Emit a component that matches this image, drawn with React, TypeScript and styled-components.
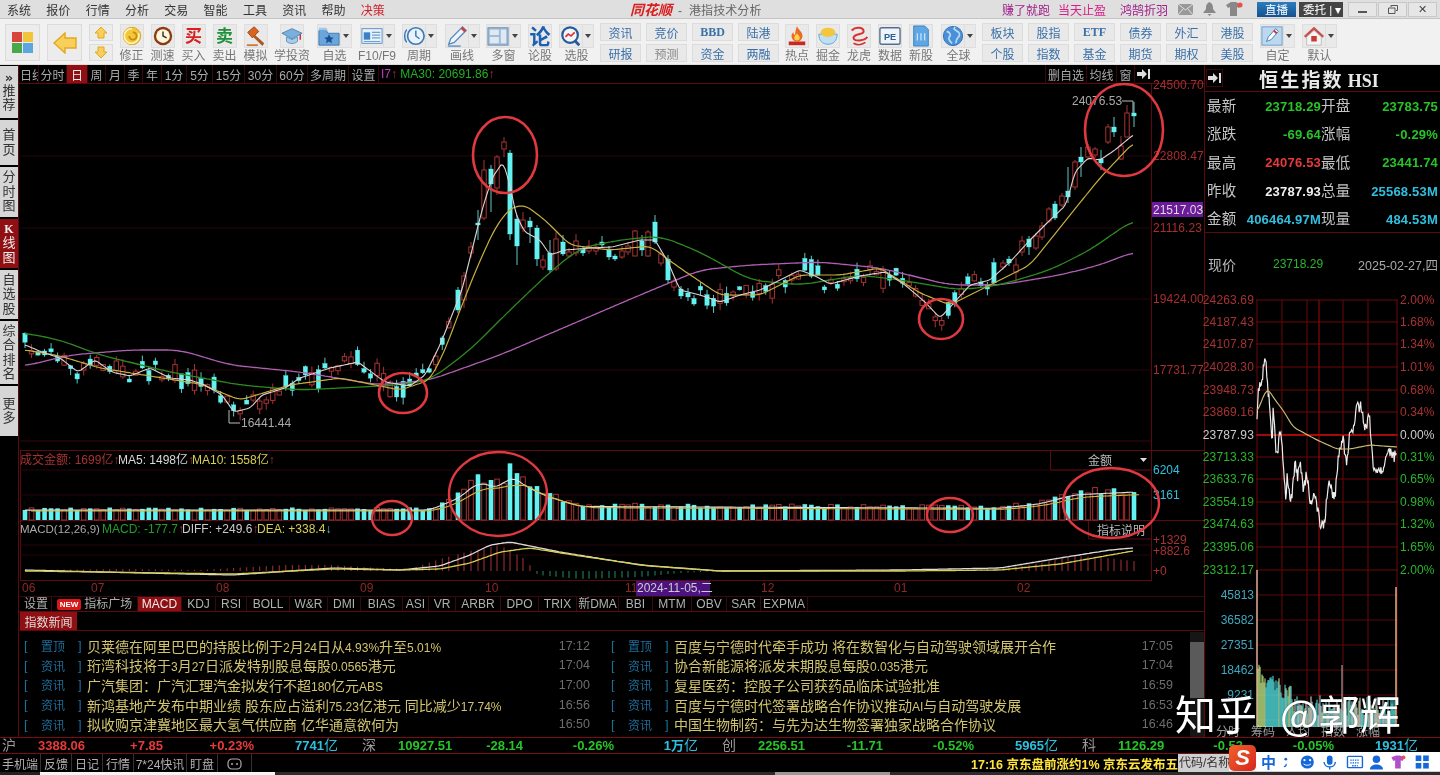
import React from 'react';
import styled, { createGlobalStyle } from 'styled-components';

const UI = `"Liberation Sans","Noto Sans CJK SC",sans-serif`;
const LINE = '#5c0a10';
const DIM = '#2a0508';

const Global = createGlobalStyle`
  html, body { margin: 0; padding: 0; background: #000; overflow: hidden; }
  #root { width: 1440px; height: 775px; }
  svg { display: block; }
  svg text { font-family: ${UI}; }
`;

/* ---------- data helpers ---------- */
type P = [number, number];
const rng = (seed: number) => () => {
  seed |= 0; seed = (seed + 0x6d2b79f5) | 0;
  let t = Math.imul(seed ^ (seed >>> 15), 1 | seed);
  t = (t + Math.imul(t ^ (t >>> 7), 61 | t)) ^ t;
  return ((t ^ (t >>> 14)) >>> 0) / 4294967296;
};
const at = (pts: P[], x: number) => {
  if (x <= pts[0][0]) return pts[0][1];
  for (let i = 1; i < pts.length; i++) {
    if (x <= pts[i][0]) {
      const [a, b] = pts[i - 1]; const [c, d] = pts[i];
      return b + ((d - b) * (x - a)) / (c - a);
    }
  }
  return pts[pts.length - 1][1];
};
const path = (pts: P[]) => pts.map((p, i) => `${i ? 'L' : 'M'}${p[0].toFixed(1)} ${p[1].toFixed(1)}`).join('');
const smooth = (pts: P[], win = 12) => {
  const x0 = pts[0][0]; const x1 = pts[pts.length - 1][0];
  const out: P[] = [];
  for (let x = x0; x <= x1; x += 2) {
    let s = 0; let n = 0;
    for (let k = -win; k <= win; k += 2) { s += at(pts, Math.min(x1, Math.max(x0, x + k))); n++; }
    out.push([x, s / n]);
  }
  return out;
};

const WHITE: P[] = [[25,345],[42,352],[60,358],[78,372],[95,360],[112,372],[130,376],[150,368],[170,378],[190,380],[205,385],[222,395],[234,412],[250,408],[262,395],[285,388],[300,378],[330,368],[358,362],[385,382],[410,386],[425,375],[440,345],[452,315],[462,290],[472,250],[482,210],[492,178],[503,162],[510,185],[516,215],[525,232],[540,240],[550,255],[565,250],[590,248],[612,247],[640,240],[655,240],[668,262],[680,290],[700,295],[720,302],[740,295],[760,290],[780,280],[800,270],[815,276],[830,284],[860,276],[885,272],[905,285],[925,302],[940,318],[952,305],[970,285],[990,280],[1010,262],[1030,240],[1048,222],[1066,205],[1075,172],[1088,158],[1100,160],[1115,150],[1133,135]];
const YELLOW: P[] = [[25,350],[60,356],[100,368],[150,376],[200,384],[240,400],[290,385],[340,378],[400,390],[430,380],[445,350],[460,310],[478,265],[495,228],[510,208],[525,205],[545,220],[570,245],[610,250],[650,246],[680,268],[720,295],[760,295],[800,275],[840,275],[880,268],[920,293],[950,305],[990,285],[1030,265],[1070,215],[1100,178],[1133,143]];
const GREEN: P[] = [[25,333],[60,340],[100,355],[170,372],[240,385],[300,390],[400,385],[430,380],[470,350],[510,310],[550,272],[580,248],[620,240],[660,236],[700,252],[750,280],[800,285],[860,275],[900,280],[960,290],[1000,285],[1050,270],[1090,250],[1133,220]];
const PURPLE: P[] = [[25,366],[70,355],[130,350],[180,350],[230,365],[300,372],[380,385],[430,380],[500,355],[570,325],[640,295],[700,270],[750,265],[820,262],[880,268],[950,285],[1000,285],[1060,275],[1100,265],[1133,252]];

type Candle = { x: number; t: number; b: number; h: number; l: number; up: boolean };
const c = (x: number, t: number, b: number, up: boolean, h = t - 3, l = b + 3): Candle => ({ x, t, b, h, l, up });
const PEAK: Candle[] = [
  c(458,290,310,false),c(464,276,300,true,272,308),c(471,247,253,true,242,258),c(478,223,225,false,210,240),c(484,170,218,true,160,220),c(491,169,184,false,165,212),c(497,157,188,true,155,195),c(504,142,149,true,137,157),c(510,153,234,false,150,240),c(517,219,246,false,215,265),c(523,220,228,true,212,232),c(530,221,227,false,217,243),c(537,228,259,false,225,266),c(543,260,267,true,255,270),c(550,253,270,false,240,273),c(556,239,269,true,232,271),c(563,242,254,false,235,256),c(569,252,256,true,248,258),c(576,241,253,true,234,256),c(583,249,253,false,246,256),c(589,246,251,true,240,254),c(596,247,251,true,243,255),c(602,242,245,false,236,248),c(609,249,257,false,246,260),c(615,256,259,false,254,261),c(622,251,257,true,246,259),c(628,246,252,true,242,255),c(635,231,256,true,230,256),c(642,241,250,false,235,256),c(648,232,256,true,230,257),c(655,222,242,false,215,244),c(661,254,263,true,250,266),c(668,259,280,false,255,283),c(674,281,287,true,278,291),c(681,289,296,false,286,299),c(688,293,297,false,288,301)];
const TAIL: Candle[] = [
  c(1003,263,267,true),c(1009,259,263,false),c(1016,265,272,true,258,283),c(1022,241,252,true,236,256),c(1029,239,247,false,236,255),c(1036,236,248,true,233,250),c(1042,226,237,true,222,240),c(1049,209,221,true,207,223),c(1055,204,218,false,201,220),c(1062,196,205,true,193,207),c(1068,191,197,false,167,203),c(1075,162,187,true,160,190),c(1081,157,162,false,147,177),c(1088,147,157,true,144,160),c(1095,149,155,true,147,158),c(1101,159,163,false,150,170),c(1108,127,142,true,124,144),c(1114,127,132,false,117,137),c(1121,146,159,true,136,160),c(1127,113,137,true,105,137),c(1134,113,116,false,102,127)];

const CANDLES: Candle[] = (() => {
  const r = rng(77);
  const gen = (from: number, to: number) => {
    const out: Candle[] = [];
    for (let x = from; x < to; x += 6.52) {
      const up = r() > 0.55;
      const mid = at(WHITE, x) + (r() - 0.5) * 16;
      const half = 1.5 + r() * r() * 9;
      const t = mid - half; const b = mid + half;
      out.push(c(x, t, b, up, t - r() * 7, b + r() * 7));
    }
    return out;
  };
  return [...gen(25, 454), ...PEAK, ...gen(694, 1000), ...TAIL];
})();

const VOLP: P[] = [[25,11],[430,11],[445,18],[460,25],[478,42],[500,35],[510,50],[525,38],[545,27],[580,15],[1000,13],[1040,18],[1075,28],[1134,31]];
const VOLS = (() => { const r = rng(9); return CANDLES.map(k => at(VOLP, k.x) * (0.85 + r() * 0.3)); })();
const DIFF: P[] = [[25,570],[100,572],[233,575],[333,568],[400,570],[440,566],[470,555],[490,545],[510,542],[560,552],[640,565],[720,571],[900,570],[1000,568],[1060,558],[1110,550],[1133,548]];
const DEA: P[] = [[25,571],[100,572],[233,574],[333,569],[400,570],[440,569],[470,563],[500,552],[530,548],[580,556],[650,566],[720,571],[900,571],[1000,570],[1060,564],[1110,555],[1133,551]];
const MBAR: P[] = [[25,1],[120,2],[200,1],[285,6],[330,6],[380,3],[410,2],[440,12],[470,20],[500,26],[525,12],[538,-4],[580,-8],[640,-6],[680,-2],[720,0],[800,1],[1000,2],[1040,8],[1075,15],[1100,14],[1133,10]];

const TIMEP: P[] = [[1257,417],[1258,393],[1262,380],[1265,353],[1267,380],[1270,407],[1272,450],[1273,410],[1277,460],[1280,427],[1283,457],[1286,500],[1287,477],[1291,503],[1295,463],[1298,477],[1300,460],[1303,490],[1307,473],[1310,500],[1315,497],[1321,528],[1325,520],[1328,483],[1335,498],[1338,460],[1343,438],[1347,465],[1349,440],[1353,427],[1357,408],[1361,407],[1366,430],[1369,413],[1373,465],[1378,473],[1383,472],[1388,450],[1393,457],[1397,454]];
const TIMEA: P[] = [[1257,413],[1267,387],[1275,400],[1283,410],[1293,427],[1317,440],[1337,449],[1350,449],[1370,445],[1397,447]];
const TIME_LINE: P[] = (() => { const r = rng(5); const o: P[] = []; for (let x = 1257; x <= 1397; x += 0.7) o.push([x, at(TIMEP, x) + (r() - 0.5) * 12]); return o; })();
const TIME_VOL = (() => {
  const r = rng(31); const o: { x: number; h: number; col: string }[] = [];
  for (let x = 1258; x < 1396; x += 1) {
    const base = x < 1265 ? 66 : x < 1280 ? 52 : x < 1292 ? 44 : 32;
    const col = x < 1265 ? '#c8f08a' : r() > 0.85 ? '#d8f0a0' : x < 1292 || r() > 0.5 ? '#55eaea' : '#e8e8e8';
    const dense = x < 1292 ? 0.65 + r() * 0.35 : 0.35 + r() * 0.65;
    o.push({ x, h: base * dense, col });
  }
  return o;
})();

/* ---------- page structure ---------- */
const Page = styled.div`
  position: relative; width: 1440px; height: 775px; overflow: hidden; filter: blur(.3px);
  display: flex; flex-direction: column; background: #000; font-family: ${UI};
`;
const MenuBar = styled.div`
  height: 18px; flex: none; display: flex; align-items: center; background: #dfdfdf;
  border-bottom: 1px solid #c4c4c4; box-sizing: content-box; font-size: 12px; color: #333;
`;
const MenuLeft = styled.div`width: 630px; padding-left: 7px; box-sizing: border-box; display: flex; gap: 15.3px;`;
const MenuItem = styled.span<{ $red?: boolean }>`color: ${p => (p.$red ? '#d0202a' : '#333')};`;
const Brand = styled.div`width: 372px; display: flex; align-items: center; color: #666; font-size: 12px; letter-spacing: .1px;`;
const Logo = styled.span`
  font-style: italic; font-weight: 700; font-size: 14px; color: #d81e1e; margin-right: 4px; width: 44px;
  white-space: nowrap; letter-spacing: 0;
`;
const Promo = styled.span<{ $c: string; $w: number }>`width: ${p => p.$w}px; color: ${p => p.$c}; font-size: 12px; flex: none;`;
const Glyph = styled.span<{ $w: number }>`width: ${p => p.$w}px; flex: none; display: flex; align-items: center;`;
const LiveBtn = styled.span`
  width: 39px; height: 15px; background: linear-gradient(#2a7dc0,#15518c); color: #fff; font-size: 11.5px;
  display: flex; align-items: center; justify-content: center; margin-right: 3px; flex: none;
`;
const EntrustBtn = styled(LiveBtn)`width: 44px; background: #444; justify-content: flex-start; padding-left: 4px; box-sizing: border-box; margin-right: 5px;`;
const WinBtn = styled.span`
  width: 29px; height: 15px; background: #e6e6e6; border: 1px solid #c8c8c8; box-sizing: border-box; flex: none;
  display: flex; align-items: center; justify-content: center; color: #444; font-size: 11px; margin-right: 1px;
`;

const Toolbar = styled.div`
  height: 46px; flex: none; display: flex; align-items: flex-start; background: #f1f1f1; padding: 5px 0 0 5px; box-sizing: border-box;
  border-bottom: 1px solid #ddd;
`;
const Slot = styled.div<{ $w: number; $ml?: number }>`
  width: ${p => p.$w}px; margin-left: ${p => p.$ml ?? 0}px; flex: none; display: flex; flex-direction: column; align-items: center;
`;
const BigTile = styled.div`
  width: 35px; height: 37px; background: #ececec; border: 1px solid #dcdcdc; box-sizing: border-box;
  display: flex; align-items: center; justify-content: center;
`;
const StackBtn = styled.div`
  width: 24px; height: 17px; background: #ececec; border: 1px solid #dcdcdc; box-sizing: border-box; margin-bottom: 3px;
  display: flex; align-items: center; justify-content: center;
`;
const TileRow = styled.div`display: flex; height: 24px;`;
const Tile = styled.div`
  width: 24px; height: 24px; background: #e9e9e9; border: 1px solid #dedede; box-sizing: border-box;
  display: flex; align-items: center; justify-content: center; overflow: hidden;
`;
const Drop = styled.div`
  width: 11px; height: 24px; background: #e9e9e9; border: 1px solid #dedede; border-left: 0; box-sizing: border-box;
  display: flex; align-items: center; justify-content: center;
  &::after { content: ''; border: 3.5px solid transparent; border-top: 4px solid #444; border-bottom: 0; }
`;
const Caption = styled.span`font-size: 12px; line-height: 15px; margin-top: 1px; color: #777; white-space: nowrap;`;
const ChipColumn = styled.div<{ $ml: number }>`margin-left: ${p => p.$ml}px; width: 41px; display: flex; flex-direction: column; gap: 3px; flex: none; margin-top: -1px;`;
const Chip = styled.div<{ $muted?: boolean; $bold?: boolean }>`
  height: 18px; background: #e9e9e9; border: 1px solid #dcdcdc; box-sizing: border-box; display: flex; align-items: center; justify-content: center;
  font-size: 12px; color: ${p => (p.$muted ? '#888' : '#3a70a8')};
  ${p => p.$bold && `font-weight: 700; font-family: "Liberation Serif",serif;`}
`;
const BigChar = styled.span<{ $c: string; $s: number }>`font-size: ${p => p.$s}px; font-weight: 700; color: ${p => p.$c}; line-height: 1;`;

const Body = styled.div`height: 672px; flex: none; display: flex;`;
const Sidebar = styled.div`width: 19px; flex: none; display: flex; flex-direction: column; gap: 2px; padding-top: 1px; box-sizing: border-box; border-right: 1px solid ${LINE};`;
const SideTab = styled.div<{ $h: number; $on?: boolean }>`
  height: ${p => p.$h}px; flex: none; background: ${p => (p.$on ? '#8f0f12' : '#d6d6d6')}; color: ${p => (p.$on ? '#eee' : '#333')};
  font-size: 13px; line-height: 14.5px; text-align: center; display: flex; flex-direction: column; justify-content: center; align-items: center;
`;
const SideSpacer = styled.span`font-size: 13px; font-weight: 700; line-height: 12px; font-family: "DejaVu Sans",sans-serif;`;
const SideK = styled.span`font-family: "Liberation Serif",serif; font-weight: 700; font-size: 12px;`;

const Center = styled.div`width: 1185px; flex: none; display: flex; flex-direction: column; border-right: 1px solid ${LINE};`;
const PeriodBar = styled.div`height: 19px; flex: none; display: flex; align-items: stretch; border-bottom: 1px solid ${LINE}; box-sizing: border-box; font-size: 12px; color: #aaa;`;
const Period = styled.div<{ $w: number; $on?: boolean; $clip?: boolean }>`
  width: ${p => p.$w}px; flex: none; overflow: hidden; white-space: nowrap; display: flex; align-items: center; justify-content: ${p => (p.$clip ? 'flex-start' : 'center')};
  padding-left: ${p => (p.$clip ? '1px' : '0')};
  border-right: 1px solid #3a070b; box-sizing: border-box; background: ${p => (p.$on ? '#8f0f12' : 'transparent')}; color: ${p => (p.$on ? '#eee' : '#aaa')};
`;
const MALegend = styled.div`display: flex; align-items: center; margin-left: 2px; font-size: 12px; white-space: nowrap;`;
const Tint = styled.span<{ $c: string }>`color: ${p => p.$c};`;
const HeadRight = styled.div`margin-left: auto; display: flex; align-items: stretch; margin-right: 52px;`;
const HeadCell = styled.div<{ $w: number }>`
  width: ${p => p.$w}px; display: flex; align-items: center; justify-content: center; border-left: 1px solid #3a070b; color: #aaa; font-size: 12px; white-space: nowrap;
`;
const ChartSvg = styled.svg`flex: none; overflow: visible; position: relative;`;
const IndicatorBar = styled.div`height: 16px; flex: none; display: flex; align-items: stretch; font-size: 12px; line-height: 14px; color: #b0b0b0; border-bottom: 1px solid ${LINE}; border-top: 1px solid #3a070b; box-sizing: border-box; padding-left: 2px;`;
const Indicator = styled.div<{ $w: number; $on?: boolean }>`
  width: ${p => p.$w}px; flex: none; display: flex; align-items: center; justify-content: center; white-space: nowrap; box-sizing: border-box;
  border-right: 1px solid #3a070b; background: ${p => (p.$on ? '#8f0f12' : 'transparent')}; color: ${p => (p.$on ? '#eee' : '#b0b0b0')};
`;
const NewBadge = styled.span`
  background: #d81818; color: #fff; font-size: 8px; border-radius: 2px; padding: 1px 3px; margin-right: 3px; line-height: 9px; font-weight: 700;
`;
const NewsHead = styled.div`height: 19px; flex: none; border-bottom: 1px solid ${LINE}; box-sizing: border-box;`;
const NewsTab = styled.div`width: 57px; height: 18px; margin-left: 1px; background: #8f0f12; color: #ddd; font-size: 12px; display: flex; align-items: center; justify-content: center;`;
const NewsBody = styled.div`height: 106px; flex: none; display: grid; grid-template-columns: 587px 583px 14px; padding: 5px 0 0 1px; box-sizing: border-box;`;
const NewsCol = styled.div`display: flex; flex-direction: column;`;
const NewsRow = styled.div`
  height: 19.6px; display: grid; grid-template-columns: 17px 37px 9px 1fr 46px; align-items: center; font-size: 13px; padding-left: 4px; padding-right: 17px; box-sizing: border-box;
`;
const Bracket = styled.span`color: #1c6e9c; font-size: 13px;`;
const NewsTag = styled.span`color: #1c6e9c; font-size: 12px;`;
const NewsTitle = styled.span`color: #d2c46e; font-size: 14px; white-space: nowrap; overflow: hidden;`;
const NewsLatin = styled.span`font-size: 12px;`;
const NewsTime = styled.span`color: #6d6d6d; text-align: right; font-size: 12.5px;`;
const Scroll = styled.div`background: #161616; margin-top: -4px; display: flex; flex-direction: column;`;
const Thumb = styled.div`height: 56px; margin-top: 10px; background: #5a5a5a;`;

const RightPanel = styled.div`flex: 1; display: flex; flex-direction: column; min-width: 0;`;
const TitleRow = styled.div`height: 27px; flex: none; display: flex; align-items: center; border-bottom: 1px solid ${LINE}; box-sizing: border-box; position: relative;`;
const PinBtn = styled.div`width: 17px; height: 18px; margin-left: 1px; border: 1px solid #3a070b; box-sizing: border-box; display: flex; align-items: center; justify-content: center;`;
const Title = styled.div`
  margin-left: 36px; font-family: "Liberation Serif","Noto Sans CJK SC",serif; font-weight: 700; font-size: 19px; letter-spacing: 2.2px; color: #e8e8e8; white-space: nowrap;
`;
const TitleCode = styled.span`font-size: 18px; letter-spacing: 0; margin-left: -3px;`;
const Stats = styled.div`
  height: 141px; flex: none; display: grid; grid-template-columns: 30px 84px 30px 1fr; grid-auto-rows: 28.3px; padding: 0 2px 0 2px;
  border-bottom: 1px solid ${LINE}; box-sizing: border-box; align-items: center;
`;
const StatLabel = styled.span`font-size: 14.5px; line-height: 20px; color: #c4c4c4; letter-spacing: .2px; white-space: nowrap;`;
const StatVal = styled.span<{ $c: string }>`font-size: 13px; font-weight: 700; color: ${p => p.$c}; text-align: right; letter-spacing: .2px; white-space: nowrap;`;
const QuoteRow = styled.div`height: 62px; flex: none; display: grid; grid-template-columns: 65px 50px 1fr; align-items: center; padding: 0 2px 0 3px; box-sizing: border-box; font-size: 12px; color: #b8b8b8;`;
const QuoteLabel = styled.span`font-size: 14px;`;
const QuoteDate = styled.span`text-align: right; font-size: 12.5px; color: #aaa;`;
const TimeTabs = styled.div`height: 10px; flex: none; display: flex; font-size: 12px; color: #999; padding-left: 11px; gap: 11px; line-height: 10px; overflow: visible;`;

const IndexBar = styled.div`height: 17px; flex: none; display: grid; grid-template-columns: repeat(4, 360px); border-top: 1px solid #7a0c12; border-bottom: 1px solid #7a0c12; box-sizing: border-box; align-items: center;`;
const IndexCell = styled.div`display: grid; grid-template-columns: 38px 58px 67px 91px 84px; align-items: center; font-size: 13px; line-height: 15px; height: 15px; font-weight: 700; white-space: nowrap;`;
const IndexName = styled.span`color: #999; font-size: 14px; font-weight: 400; padding-left: 2px;`;
const IndexVal = styled.span<{ $c: string; $r?: boolean }>`color: ${p => p.$c}; text-align: ${p => (p.$r ? 'right' : 'left')};`;
const IndexAmt = styled(IndexVal)`font-weight: 400; font-size: 14px; & b { font-weight: 700; font-size: 13px; }`;
const StatusBar = styled.div`height: 18px; flex: none; display: flex; align-items: center; font-size: 12px; color: #b0b0b0;`;
const StatusCell = styled.div<{ $w: number }>`width: ${p => p.$w}px; flex: none; text-align: center; border-right: 1px solid #333; white-space: nowrap; height: 100%; display: flex; align-items: center; justify-content: center;`;
const Ticker = styled.div`margin-left: auto; color: #ffe23a; font-weight: 700; font-size: 12.5px; white-space: nowrap;`;
const CodeBox = styled.div`width: 262px; height: 100%; flex: none; background: #cfcfcf; color: #333; font-size: 12px; line-height: 18px; padding-left: 1px; box-sizing: border-box;`;
const BottomStrip = styled.div`height: 3px; flex: none; background: #333; display: flex;`;
const StripPart = styled.div<{ $w: number; $c: string }>`width: ${p => p.$w}px; background: ${p => p.$c}; flex: none;`;

const Watermark = styled.div`
  position: absolute; left: 1175px; top: 687px; display: flex; gap: 23px; color: #fff; font-size: 41px; line-height: 50px; font-weight: 400;
  font-family: "Noto Sans CJK SC",sans-serif; white-space: nowrap; text-shadow: 0 0 2px rgba(0,0,0,.4); pointer-events: none; letter-spacing: 0;
`;
const Ime = styled.div`
  position: absolute; left: 1229px; top: 752px; width: 211px; height: 19px; background: #fff; display: flex; align-items: center; padding-left: 32px; gap: 7px; box-sizing: border-box;
`;
const ImeLogo = styled.div`
  position: absolute; left: 0; top: -7px; width: 27px; height: 26px; border-radius: 5px; background: linear-gradient(135deg,#f0612a,#d8261e);
  color: #fff; font: italic 700 22px "Liberation Sans",sans-serif; display: flex; align-items: center; justify-content: center;
`;
const ImeText = styled.span`color: #1668d8; font-size: 15px; font-weight: 700;`;

/* ---------- icons ---------- */
const I = ({ s = 22, children }: { s?: number; children: React.ReactNode }) => <svg width={s} height={s} viewBox="0 0 24 24">{children}</svg>;
const Ico: Record<string, React.ReactNode> = {
  fix: <I><circle cx="12" cy="12" r="9.5" fill="#f3c63c" stroke="#d6a020"/><path d="M12 4a8 8 0 1 0 7 5" fill="none" stroke="#fff3b0" strokeWidth="2"/><path d="M9 12a4 4 0 1 0 4-4" fill="none" stroke="#c98a10" strokeWidth="2"/></I>,
  speed: <I><circle cx="12" cy="12" r="10" fill="#8a3b12"/><circle cx="12" cy="12" r="7.5" fill="#fff6dc"/><path d="M12 7v5l4 2" fill="none" stroke="#333" strokeWidth="1.6"/></I>,
  gavel: <I><path d="M3 8l7-6 5 5-7 7z" fill="#d9641e" stroke="#9a3c0c"/><path d="M11 11l10 9-2 3-10-10z" fill="#a85a22"/><path d="M2 22h12" stroke="#c87a3a" strokeWidth="2"/></I>,
  cap: <I><path d="M1 9l11-5 11 5-11 6z" fill="#7ab0dc" stroke="#4d84b4"/><path d="M6 13v5c4 3 8 3 12 0v-5l-6 3z" fill="#a8cde8" stroke="#5f92bc"/><path d="M21 10v6" stroke="#c83030" strokeWidth="1.6"/></I>,
  star: <I><path d="M1 6h8l2 3h12v13H1z" fill="#6aa6dc" stroke="#3d78b0"/><path d="M1 3h8l2 3H1z" fill="#9cc8ec"/><path d="M12 10l1.6 3.4 3.6.4-2.7 2.4.8 3.6-3.3-1.9-3.3 1.9.8-3.6-2.7-2.4 3.6-.4z" fill="#1d4f96"/></I>,
  f10: <I><rect x="1" y="4" width="22" height="16" fill="#e8f2fb" stroke="#5a8fc4"/><rect x="3" y="8" width="7" height="8" fill="#3b7fc8"/><path d="M12 8h9M12 11h9M12 14h9M3 18h18" stroke="#6fa0d0" strokeWidth="1.3"/></I>,
  cycle: <I><circle cx="14" cy="12" r="9" fill="#eaf3fb" stroke="#3b78b8" strokeWidth="1.8"/><path d="M14 6v6l4 3" fill="none" stroke="#3b78b8" strokeWidth="1.6"/><path d="M4 5c-3 4-3 10 0 14" fill="none" stroke="#3b78b8" strokeWidth="1.6"/></I>,
  pen: <I><path d="M3 21l2-6L18 2l4 4L9 19z" fill="#eef4fa" stroke="#4f88c0" strokeWidth="1.4"/><path d="M16 4l4 4 2-2-4-4z" fill="#d63a3a"/><path d="M2 23h14" stroke="#4f88c0" strokeWidth="1.4"/></I>,
  win: <I><rect x="1" y="3" width="22" height="19" fill="#9db9d6" stroke="#6c8fb2"/><rect x="3" y="5" width="10" height="6" fill="#dfe9f3"/><rect x="3" y="13" width="10" height="7" fill="#dfe9f3"/><rect x="15" y="5" width="6" height="15" fill="#dfe9f3"/></I>,
  scan: <I><circle cx="11" cy="11" r="8.5" fill="#f2f6fb" stroke="#235a9c" strokeWidth="2.4"/><path d="M16 17l5 5" stroke="#235a9c" strokeWidth="3"/><path d="M6 13l3-3 3 2 4-4" fill="none" stroke="#d83030" strokeWidth="1.8"/></I>,
  fire: <I><path d="M12 1c1 4 6 6 6 11a6 6 0 0 1-12 0c0-2 1-3 2-4 0 2 1 3 2 3 0-4 1-7 2-10z" fill="#ec6a22"/><path d="M12 9c1 2 3 3 3 5a3 3 0 0 1-6 0c0-2 2-3 3-5z" fill="#ffd34a"/><rect x="3" y="18" width="18" height="4" fill="#c8281e"/></I>,
  bowl: <I><path d="M2 10h20c0 7-4 11-10 11S2 17 2 10z" fill="#bfe0f4" stroke="#62a4d0"/><ellipse cx="12" cy="8" rx="8" ry="5" fill="#f3c63c"/></I>,
  dragon: <I><path d="M4 6c5-5 13-3 13 1s-11 2-11 7 13 3 15-1" fill="none" stroke="#d83030" strokeWidth="2.2"/><path d="M6 20c4 2 9 2 13-1" fill="none" stroke="#d83030" strokeWidth="1.8"/></I>,
  pe: <I><rect x="1" y="3" width="22" height="18" rx="2" fill="#eef4fa" stroke="#56708c" strokeWidth="1.5"/><text x="12" y="16" textAnchor="middle" fontSize="10" fontWeight="700" fill="#2e5f94">PE</text></I>,
  doc: <I><path d="M4 1h12l4 4v18H4z" fill="#5fa6e4" stroke="#3c80c0"/><path d="M8 9v8M12 9v8M16 9v8" stroke="#cfe6fa" strokeWidth="1.3"/></I>,
  globe: <I><circle cx="12" cy="12" r="10.5" fill="#4a90d8" stroke="#2e6cb0"/><path d="M5 7c4 1 5 4 3 6s1 5 3 7M14 2c-2 3 1 4 3 5s3 4 1 6-3 4-3 7" fill="none" stroke="#bcdcf6" strokeWidth="1.8"/></I>,
  edit: <I><rect x="1" y="2" width="22" height="20" fill="#bcd8f0" stroke="#6a9cc8"/><path d="M6 18l2-5 8-9 3 3-8 9z" fill="#fff" stroke="#3a78b8"/><path d="M14 6l3 3" stroke="#d83030" strokeWidth="2"/></I>,
  home: <I><path d="M12 2L1 12l2 2 9-8 9 8 2-2z" fill="#c8504a"/><path d="M4 13v9h16v-9L12 6z" fill="#f5f5f5" stroke="#bbb"/><rect x="9" y="12" width="6" height="6" fill="#c83a34"/></I>,
};
const ColorGrid = () => (
  <svg width="21" height="21" viewBox="0 0 21 21"><rect width="10" height="10" fill="#d8453a"/><rect x="11" width="10" height="10" fill="#f2c437"/><rect y="11" width="10" height="10" fill="#4aa84a"/><rect x="11" y="11" width="10" height="10" fill="#5aa6de"/></svg>
);
const BackArrow = () => (
  <svg width="24" height="22" viewBox="0 0 24 22"><path d="M1 11L12 1v5h11v10H12v5z" fill="#f8cf5a" stroke="#e4a81e" strokeWidth="1.4"/></svg>
);
const Vert = ({ down }: { down?: boolean }) => (
  <svg width="14" height="13" viewBox="0 0 14 13"><path d={down ? 'M7 12L1 6h3V1h6v5h3z' : 'M7 1l6 6h-3v5H4V7H1z'} fill="#f8cf5a" stroke="#e4a81e"/></svg>
);
const Pin = () => <svg width="13" height="10" viewBox="0 0 13 10"><path d="M0 3h5V0l5 5-5 5V7H0z" fill="#ddd"/><rect x="11" width="2" height="10" fill="#ddd"/></svg>;

type Tool = { k: string; label?: string; w: number; ml?: number; drop?: boolean; icon?: React.ReactNode; };
const char = (s: string, col: string, size = 17) => <BigChar $c={col} $s={size}>{s}</BigChar>;

const TOOLS_A: Tool[] = [
  { k: '修正', label: '修正', w: 31, ml: 3, icon: Ico.fix },
  { k: '测速', label: '测速', w: 31, icon: Ico.speed },
  { k: '买入', label: '买入', w: 31, icon: char('买', '#d82020') },
  { k: '卖出', label: '卖出', w: 31, icon: char('卖', '#1f8f3a') },
  { k: '模拟', label: '模拟', w: 31, icon: Ico.gavel },
  { k: '学投资', label: '学投资', w: 36, ml: 3, icon: Ico.cap },
  { k: '自选', label: '自选', w: 35, ml: 7, drop: true, icon: Ico.star },
  { k: 'F10', label: 'F10/F9', w: 36, ml: 7, drop: true, icon: Ico.f10 },
  { k: '周期', label: '周期', w: 36, ml: 6, drop: true, icon: Ico.cycle },
  { k: '画线', label: '画线', w: 36, ml: 7, drop: true, icon: Ico.pen },
  { k: '多窗', label: '多窗', w: 35, ml: 6, drop: true, icon: Ico.win },
  { k: '论股', label: '论股', w: 24, ml: 7, icon: char('论', '#1d5fb0', 21) },
  { k: '选股', label: '选股', w: 35, ml: 7, drop: true, icon: Ico.scan },
];
const TOOLS_B: Tool[] = [
  { k: '热点', label: '热点', w: 24, ml: 6, icon: Ico.fire },
  { k: '掘金', label: '掘金', w: 24, ml: 7, icon: Ico.bowl },
  { k: '龙虎', label: '龙虎', w: 24, ml: 7, icon: Ico.dragon },
  { k: '数据', label: '数据', w: 24, ml: 7, icon: Ico.pe },
  { k: '新股', label: '新股', w: 24, ml: 7, icon: Ico.doc },
  { k: '全球', label: '全球', w: 35, ml: 8, drop: true, icon: Ico.globe },
];
const TOOLS_C: Tool[] = [
  { k: '自定', label: '自定', w: 35, ml: 7, drop: true, icon: Ico.edit },
  { k: '默认', label: '默认', w: 35, ml: 7, drop: true, icon: Ico.home },
];
const renderTools = (list: Tool[]) => list.map(t => (
  <Slot key={t.k} $w={t.w} $ml={t.ml}>
    <TileRow><Tile>{t.icon}</Tile>{t.drop && <Drop />}</TileRow>
    <Caption>{t.label}</Caption>
  </Slot>
));
type ChipDef = [string, string, boolean?, boolean?];
const renderChips = (cols: ChipDef[], first: number) => cols.map((x, i) => (
  <ChipColumn key={x[0]} $ml={i === 0 ? first : 5}>
    <Chip $bold={x[2]}>{x[0]}</Chip>
    <Chip $muted={x[3]}>{x[1]}</Chip>
  </ChipColumn>
));

const PERIODS: [string, number, boolean?][] = [['日线',20],['分时',28],['日',21,true],['周',18],['月',19],['季',18],['年',19],['1分',25],['5分',26],['15分',32],['30分',32],['60分',31],['多周期',41],['设置',30]];
const INDICATORS: [string, number, boolean?][] = [['KDJ',34],['RSI',31],['BOLL',43],['W&R',38],['DMI',33],['BIAS',42],['ASI',26],['VR',27],['ARBR',45],['DPO',38],['TRIX',38],['新DMA',42],['BBI',34],['MTM',39],['OBV',35],['SAR',34],['EXPMA',47]];

const NEWS_L: [string, string, string][] = [
  ['置顶','贝莱德在阿里巴巴的持股比例于2月24日从4.93%升至5.01%','17:12'],
  ['资讯','珩湾科技将于3月27日派发特别股息每股0.0565港元','17:04'],
  ['资讯','广汽集团\uFF1A广汽汇理汽金拟发行不超180亿元ABS','17:00'],
  ['资讯','新鸿基地产发布中期业绩 股东应占溢利75.23亿港元 同比减少17.74%','16:56'],
  ['资讯','拟收购京津冀地区最大氢气供应商 亿华通意欲何为','16:50'],
];
const NEWS_R: [string, string, string][] = [
  ['置顶','百度与宁德时代牵手成功 将在数智化与自动驾驶领域展开合作','17:05'],
  ['资讯','协合新能源将派发末期股息每股0.035港元','17:04'],
  ['资讯','复星医药\uFF1A控股子公司获药品临床试验批准','16:59'],
  ['资讯','百度与宁德时代签署战略合作协议推动AI与自动驾驶发展','16:53'],
  ['资讯','中国生物制药\uFF1A与先为达生物签署独家战略合作协议','16:46'],
];
const Headline = ({ text }: { text: string }) => (
  <NewsTitle>
    {text.split(/([A-Za-z0-9.%]+)/).map((part, i) => (i % 2 ? <NewsLatin key={i}>{part}</NewsLatin> : part))}
  </NewsTitle>
);
const renderNews = (list: [string, string, string][]) => list.map((n, i) => (
  <NewsRow key={i}>
    <Bracket>[</Bracket><NewsTag>{n[0]}</NewsTag><Bracket>]</Bracket><Headline text={n[1]} /><NewsTime>{n[2]}</NewsTime>
  </NewsRow>
));

const G = '#27c427'; const R = '#e83a3a'; const CY = '#2fc0e0';
const STATS: [string, string, string][] = [
  ['最新','23718.29',G],['开盘','23783.75',G],['涨跌','-69.64',G],['涨幅','-0.29%',G],['最高','24076.53',R],['最低','23441.74',G],
  ['昨收','23787.93','#eee'],['总量','25568.53M',CY],['金额','406464.97M',CY],['现量','484.53M',CY],
];
const INDEXES: [string, string, string, string, string, string, string][] = [
  ['沪','3388.06','+7.85','+0.23%','7741','亿',R],
  ['深','10927.51','-28.14','-0.26%','1万','亿',G],
  ['创','2256.51','-11.71','-0.52%','5965','亿',G],
  ['科','1126.29','-0.53','-0.05%','1931','亿',G],
];

/* ---------- charts ---------- */
const RED = '#a83232'; const CYAN = '#62f2f2';
const MainChart = () => (
  <ChartSvg width="1185" height="366" viewBox="19 84 1185 366">
    {[156, 228, 299, 370].map(y => <line key={y} x1="20" x2="1151" y1={y} y2={y} stroke={DIM} />)}
    <line x1="20" x2="1151" y1="441" y2="441" stroke="#3a070b" />
    <line x1="1151.5" x2="1151.5" y1="84" y2="450" stroke={LINE} />
    {CANDLES.map((k, i) => {
      const col = k.up ? RED : CYAN;
      return (
        <g key={i}>
          <line x1={k.x} x2={k.x} y1={k.h} y2={k.l} stroke={k.up ? RED : '#5cc8c8'} />
          <rect x={k.x - 2.2} y={k.t} width="4.4" height={Math.max(1.5, k.b - k.t)} fill={k.up ? '#000' : col} stroke={col} strokeWidth={k.up ? 1 : 0.3} />
        </g>
      );
    })}
    <path d={path(smooth(PURPLE, 14))} fill="none" stroke="#b060b4" strokeWidth="1.3" />
    <path d={path(smooth(GREEN, 14))} fill="none" stroke="#2e8a20" strokeWidth="1.3" />
    <path d={path(smooth(YELLOW, 6))} fill="none" stroke="#c8b040" strokeWidth="1.2" />
    <path d={path(smooth(WHITE, 2))} fill="none" stroke="#dcd4d4" strokeWidth="1.1" />
    <text x="1072" y="105" fontSize="12" fill="#aaa">24076.53</text>
    <path d="M1122 101h11v12" fill="none" stroke="#bbb" />
    <text x="241" y="427" fontSize="12" fill="#aaa">16441.44</text>
    <path d="M229 410v13h11" fill="none" stroke="#bbb" />
    {[['24500.70',85],['22808.47',156],['21116.23',228],['19424.00',299],['17731.77',370]].map(([t, y]) => (
      <text key={t as string} x="1153" y={(y as number) + 4} fontSize="12" fill="#a82e2e" letterSpacing=".1">{t}</text>
    ))}
    <rect x="1152" y="202" width="51" height="15" fill="#6a1a9a" />
    <text x="1153" y="214" fontSize="12" fill="#ddd">21517.03</text>
    {[[505,155,32,38],[403,393,24,20],[941,319,22,20],[1124,130,39,46]].map(([x, y, a, b]) => (
      <ellipse key={x} cx={x} cy={y} rx={a} ry={b} fill="none" stroke="#e0393f" strokeWidth="2.6" />
    ))}
  </ChartSvg>
);

const LowerChart = () => (
  <ChartSvg width="1185" height="146" viewBox="19 450 1185 146">
    <rect x="20.5" y="450.5" width="1131" height="130" fill="none" stroke={LINE} />
    <path d="M20 520.500H1204M1151 450.500H1204" stroke={LINE} />
    {[470, 495, 545, 555].map(y => <line key={y} x1="20" x2="1151" y1={y} y2={y} stroke={DIM} />)}
    <path d="M1050.500 450v20H1151M1088.500 520v19H1151" fill="none" stroke={LINE} />
    {CANDLES.map((k, i) => (
      <rect key={i} x={k.x - 2.3} y={520 - VOLS[i]} width="4.6" height={VOLS[i]} fill={k.up ? '#000' : CYAN} stroke={k.up ? RED : 'none'} />
    ))}
    <path d={path(smooth(VOLP.map(([x, y]) => [x, 520 - y * 0.9] as P), 8))} fill="none" stroke="#ddd" strokeWidth="1.1" />
    <path d={path(smooth(VOLP.map(([x, y]) => [x + 6, 520 - y * 0.82] as P), 14))} fill="none" stroke="#cdbb44" strokeWidth="1.1" />
    <text x="20" y="464" fontSize="12"><tspan fill="#a83232">成交金额: 1699亿</tspan><tspan fill="#a83232">↑</tspan></text>
    <text x="118" y="464" fontSize="12"><tspan fill="#d8d8d8">MA5: 1498亿</tspan><tspan fill="#a83232">↑</tspan></text>
    <text x="192" y="464" fontSize="12"><tspan fill="#d6cf52">MA10: 1558亿</tspan><tspan fill="#a83232">↑</tspan></text>
    <text x="1088" y="465" fontSize="12" fill="#bbb">金额</text>
    <path d="M1140 458h7l-3.500 4z" fill="#ddd" />
    <text x="1153" y="474" fontSize="12" fill={CY}>6204</text>
    <text x="1153" y="499" fontSize="12" fill={CY}>3161</text>
    <text x="1097" y="535" fontSize="12" fill="#bbb">指标说明</text>
    <text x="20" y="533" fontSize="11.5" fill="#aaa">MACD(12,26,9)</text>
    <text x="102" y="533" fontSize="12"><tspan fill="#1f9f28">MACD: -177.7</tspan><tspan fill="#a83232">↑</tspan></text>
    <text x="182" y="533" fontSize="12"><tspan fill="#ccc">DIFF: +249.6</tspan><tspan fill="#a83232">↑</tspan></text>
    <text x="257" y="533" fontSize="12"><tspan fill="#d6cf52">DEA: +338.4</tspan><tspan fill="#5cc8c8">↓</tspan></text>
    {CANDLES.map((k, i) => {
      const v = at(MBAR, k.x);
      return <line key={i} x1={k.x} x2={k.x} y1="571" y2={571 - v} stroke={v < 0 ? '#1f8f6a' : '#a83232'} />;
    })}
    <path d={path(smooth(DIFF, 4))} fill="none" stroke="#dcdcdc" strokeWidth="1.3" />
    <path d={path(smooth(DEA, 4))} fill="none" stroke="#d8d050" strokeWidth="1.3" />
    {[['+1329',544],['+882.6',555],['+0',575]].map(([t, y]) => <text key={t as string} x="1153" y={y as number} fontSize="12" fill="#a83232">{t}</text>)}
    {[['06',22],['07',91],['08',216],['09',360],['10',485],['11',625],['12',761],['01',894],['02',1017]].map(([t, x]) => (
      <text key={t as string} x={x as number} y="592" fontSize="12" fill="#8f2828">{t}</text>
    ))}
    <rect x="636" y="581" width="74" height="15" fill="#4c1280" />
    <text x="637" y="592" fontSize="12" fill="#ccc">2024-11-05,二</text>
    {[[498,494,49,42],[392,518,20,17],[950,515,23,17],[1111,503,48,35]].map(([x, y, a, b]) => (
      <ellipse key={x} cx={x} cy={y} rx={a} ry={b} fill="none" stroke="#e0393f" strokeWidth="2.4" />
    ))}
  </ChartSvg>
);

const HY = [300,322,344,367,390,412,435,457,479,502,524,547,570];
const HP = ['24263.69','24187.43','24107.87','24028.30','23948.73','23869.16','23787.93','23713.33','23633.76','23554.19','23474.63','23395.06','23312.17'];
const HQ = ['2.00%','1.68%','1.34%','1.01%','0.68%','0.34%','0.00%','0.31%','0.65%','0.98%','1.32%','1.65%','2.00%'];
const VX = [1257,1282,1307,1343,1368,1397];
const tone = (i: number) => (i < 6 ? '#a83232' : i === 6 ? '#ccc' : '#2bb52b');
const TimeChart = () => (
  <ChartSvg width="235" height="432" viewBox="1205 295 235 432">
    {HY.map((y, i) => <line key={y} x1="1256" x2="1398" y1={y} y2={y} stroke={i === 6 ? '#a50a0a' : '#6a0808'} strokeWidth={i === 6 ? 2 : 1} />)}
    {[595,620,645,670,695,720].map(y => <line key={y} x1="1256" x2="1398" y1={y} y2={y} stroke="#5a0808" />)}
    {VX.map(x => <line key={x} x1={x} x2={x} y1="300" y2="727" stroke="#6a0808" />)}
    <line x1="1319" x2="1319" y1="300" y2="727" stroke="#a50a0a" />
    <path d={path(TIME_LINE)} fill="none" stroke="#ececec" strokeWidth="1.2" />
    <path d={path(smooth(TIMEA, 3))} fill="none" stroke="#c8b870" strokeWidth="1.2" />
    {HP.map((t, i) => <text key={i} x="1254" y={HY[i] + 4} textAnchor="end" fontSize="12" fill={tone(i)} letterSpacing=".15">{t}</text>)}
    {HQ.map((t, i) => <text key={i} x="1400" y={HY[i] + 4} fontSize="12" fill={tone(i)} letterSpacing=".1">{t}</text>)}
    {[['45813',599],['36582',624],['27351',649],['18462',674],['9231',699]].map(([t, y]) => (
      <text key={t as string} x="1254" y={y as number} textAnchor="end" fontSize="12" fill="#3fa8c0">{t}</text>
    ))}
    <line x1="1257" x2="1257" y1="570" y2="727" stroke="#e8c8b0" strokeWidth="1.3" />
    {TIME_VOL.map(v => <line key={v.x} x1={v.x} x2={v.x} y1={727 - v.h} y2="727" stroke={v.col} />)}
    <line x1="1342" x2="1342" y1="665" y2="727" stroke="#bbb" />
    <line x1="1396" x2="1396" y1="587" y2="727" stroke="#f0c090" strokeWidth="1.4" />
  </ChartSvg>
);

export default function App() {
  return (
    <Page>
      <Global />
      <MenuBar>
        <MenuLeft>
          {['系统','报价','行情','分析','交易','智能','工具','资讯','帮助'].map(m => <MenuItem key={m}>{m}</MenuItem>)}
          <MenuItem $red>决策</MenuItem>
        </MenuLeft>
        <Brand><Logo>同花顺</Logo>- &nbsp;港指技术分析</Brand>
        <Promo $c="#a0208a" $w={56}>赚了就跑</Promo>
        <Promo $c="#d8208a" $w={62}>当天止盈</Promo>
        <Promo $c="#a0208a" $w={58}>鸿鹄折羽</Promo>
        <Glyph $w={25}><svg width="15" height="11" viewBox="0 0 15 11"><rect width="15" height="11" fill="#999"/><path d="M0 0l7.500 6L15 0M0 11l5-6M15 11l-5-6" fill="none" stroke="#e0e0e0"/></svg></Glyph>
        <Glyph $w={23}><svg width="13" height="14" viewBox="0 0 13 14"><path d="M6.500 0C3 2 3 4 3 7L0 11h13l-3-4c0-3 0-5-3.500-7zM4.500 12h4l-2 2z" fill="#888"/></svg></Glyph>
        <Glyph $w={31}><svg width="17" height="14" viewBox="0 0 17 14"><path d="M0 3l5-3h5l5 3-2 3-2-1v9H4V5L2 6z" fill="#888"/><circle cx="14" cy="3" r="2.500" fill="#e8504a"/></svg></Glyph>
        <LiveBtn>直播</LiveBtn>
        <EntrustBtn>委托 | ▾</EntrustBtn>
        <WinBtn><svg width="9" height="9" viewBox="0 0 9 9"><rect y="6" width="9" height="2" fill="#555"/></svg></WinBtn>
        <WinBtn><svg width="10" height="9" viewBox="0 0 10 9"><path d="M3 2V.5h6.500v5H8M.5 3h6.500v5.500H.5z" fill="none" stroke="#555"/></svg></WinBtn>
        <WinBtn>✕</WinBtn>
      </MenuBar>

      <Toolbar>
        <BigTile><ColorGrid /></BigTile>
        <Slot $w={35} $ml={7}><BigTile><BackArrow /></BigTile></Slot>
        <Slot $w={24} $ml={7}><StackBtn><Vert /></StackBtn><StackBtn><Vert down /></StackBtn></Slot>
        {renderTools(TOOLS_A)}
        {renderChips([['资讯','研报'],['竞价','预测',false,true],['BBD','资金',true],['陆港','两融']], 6)}
        {renderTools(TOOLS_B)}
        {renderChips([['板块','个股'],['股指','指数'],['ETF','基金',true],['债券','期货'],['外汇','期权'],['港股','美股']], 6)}
        {renderTools(TOOLS_C)}
      </Toolbar>

      <Body>
        <Sidebar>
          <SideTab $h={52}><SideSpacer>»</SideSpacer>推<br />荐</SideTab>
          <SideTab $h={45}>首<br />页</SideTab>
          <SideTab $h={50}>分<br />时<br />图</SideTab>
          <SideTab $h={49} $on><SideK>K</SideK>线<br />图</SideTab>
          <SideTab $h={49}>自<br />选<br />股</SideTab>
          <SideTab $h={63}>综<br />合<br />排<br />名</SideTab>
          <SideTab $h={50}>更<br />多</SideTab>
        </Sidebar>
        <Center>
          <PeriodBar>
            {PERIODS.map((p, i) => <Period key={p[0]} $w={p[1]} $on={p[2]} $clip={i === 0}>{p[0]}</Period>)}
            <MALegend>
              <Tint $c="#c040c0">I7</Tint><Tint $c="#a83232">↑</Tint>&nbsp;
              <Tint $c="#22b022">MA30: 20691.86</Tint><Tint $c="#a83232">↑</Tint>
            </MALegend>
            <HeadRight>
              <HeadCell $w={40}>删自选</HeadCell>
              <HeadCell $w={29}>均线</HeadCell>
              <HeadCell $w={17}>窗</HeadCell>
              <HeadCell $w={17}><Pin /></HeadCell>
            </HeadRight>
          </PeriodBar>
          <MainChart />
          <LowerChart />
          <IndicatorBar>
            <Indicator $w={31}>设置</Indicator>
            <Indicator $w={86}><NewBadge>NEW</NewBadge>指标广场</Indicator>
            <Indicator $w={44} $on>MACD</Indicator>
            {INDICATORS.map(x => <Indicator key={x[0]} $w={x[1]}>{x[0]}</Indicator>)}
          </IndicatorBar>
          <NewsHead><NewsTab>指数新闻</NewsTab></NewsHead>
          <NewsBody>
            <NewsCol>{renderNews(NEWS_L)}</NewsCol>
            <NewsCol>{renderNews(NEWS_R)}</NewsCol>
            <Scroll><Thumb /></Scroll>
          </NewsBody>
        </Center>
        <RightPanel>
          <TitleRow><PinBtn><Pin /></PinBtn><Title>恒生指数 <TitleCode>HSI</TitleCode></Title></TitleRow>
          <Stats>
            {STATS.map(s => (
              <React.Fragment key={s[0]}><StatLabel>{s[0]}</StatLabel><StatVal $c={s[2]}>{s[1]}</StatVal></React.Fragment>
            ))}
          </Stats>
          <QuoteRow><QuoteLabel>现价</QuoteLabel><Tint $c="#2bb52b">23718.29</Tint><QuoteDate>2025-02-27,四</QuoteDate></QuoteRow>
          <TimeChart />
          <TimeTabs><span>分时</span><span>筹码</span><span>人均</span><span>指数</span><span>涨幅</span></TimeTabs>
        </RightPanel>
      </Body>

      <IndexBar>
        {INDEXES.map(x => (
          <IndexCell key={x[0]}>
            <IndexName>{x[0]}</IndexName>
            <IndexVal $c={x[6]}>{x[1]}</IndexVal>
            <IndexVal $c={x[6]} $r>{x[2]}</IndexVal>
            <IndexVal $c={x[6]} $r>{x[3]}</IndexVal>
            <IndexAmt $c={CY} $r><b>{x[4]}</b>{x[5]}</IndexAmt>
          </IndexCell>
        ))}
      </IndexBar>
      <StatusBar>
        <StatusCell $w={40}>手机端</StatusCell>
        <StatusCell $w={30}>反馈</StatusCell>
        <StatusCell $w={30}>日记</StatusCell>
        <StatusCell $w={30}>行情</StatusCell>
        <StatusCell $w={52}>7*24快讯</StatusCell>
        <StatusCell $w={30}>盯盘</StatusCell>
        <StatusCell $w={33}><svg width="15" height="13" viewBox="0 0 15 13"><rect x="1" y="2" width="13" height="10" rx="4" fill="none" stroke="#aaa" strokeWidth="1.2"/><circle cx="5" cy="7" r="1" fill="#aaa"/><circle cx="10" cy="7" r="1" fill="#aaa"/></svg></StatusCell>
        <Ticker>17:16 京东盘前涨约1% 京东云发布五</Ticker>
        <CodeBox>代码/名称</CodeBox>
      </StatusBar>
      <BottomStrip>
        <StripPart $w={40} $c="#222" /><StripPart $w={235} $c="#f4f4f4" /><StripPart $w={500} $c="#2c2c2c" /><StripPart $w={115} $c="#999" /><StripPart $w={550} $c="#2c2c2c" />
      </BottomStrip>

      <Watermark><span>知乎</span><span>@郭辉</span></Watermark>
      <Ime>
        <ImeLogo>S</ImeLogo>
        <ImeText>中</ImeText>
        <svg width="168" height="16" viewBox="0 0 168 16">
          <circle cx="3" cy="5" r="1.500" fill="#1668d8"/><path d="M3 10c1 1 0 3-2 3" stroke="#1668d8" fill="none" strokeWidth="1.400"/>
          <circle cx="26" cy="8" r="7" fill="#1668d8"/><circle cx="23" cy="6" r="1.200" fill="#fff"/><circle cx="29" cy="6" r="1.200" fill="#fff"/><path d="M22 10c2 2 6 2 8 0" stroke="#fff" fill="none"/>
          <rect x="47" y="1" width="6" height="10" rx="3" fill="#1668d8"/><path d="M44 8c0 7 12 7 12 0M50 13v3" stroke="#1668d8" fill="none" strokeWidth="1.500"/>
          <rect x="69" y="2" width="16" height="12" rx="1" fill="none" stroke="#1668d8" strokeWidth="1.500"/><path d="M72 6h10M72 9h10M74 12h6" stroke="#1668d8" strokeWidth="1.400" strokeDasharray="1.500 1"/>
          <circle cx="100" cy="5" r="4" fill="#1668d8"/><path d="M93 16c0-7 14-7 14 0z" fill="#1668d8"/>
          <path d="M116 3l5-2h4l5 2-2 4-2-1v9h-6V6l-2 1z" fill="#b04fc8"/><circle cx="129" cy="3" r="2" fill="#e8504a"/>
          <rect x="142" y="1" width="6" height="6" fill="#1668d8"/><rect x="150" y="1" width="6" height="6" fill="#1668d8"/><rect x="142" y="9" width="6" height="6" fill="#1668d8"/><rect x="150" y="9" width="6" height="6" fill="#1668d8"/>
        </svg>
      </Ime>
    </Page>
  );
}
